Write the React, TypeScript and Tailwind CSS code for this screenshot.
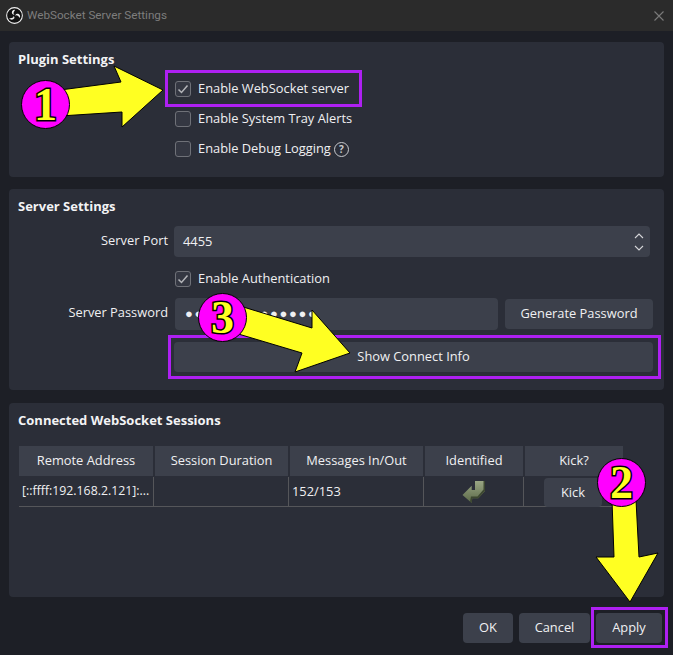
import React from "react"

const font = "font-['Open_Sans',sans-serif]"

const Checkbox = ({ checked, label, children }: { checked?: boolean; label: string; children?: React.ReactNode }) => (
  <div className="flex items-center h-[16px] text-[12.85px] text-[#f0f0f2]">
    <span className="w-[16px] h-[16px] mr-[7px] rounded-[3px] border-[1.5px] border-[#6f7178] bg-[#343742] flex items-center justify-center">
      {checked && (
        <svg width="12" height="12" viewBox="0 0 12 12" fill="none">
          <path d="M1.5 6.5L4.5 9.5L10.5 2.5" stroke="#b4b5b9" strokeWidth="1.5" />
        </svg>
      )}
    </span>
    <span>{label}</span>
    {children}
  </div>
)

const Panel = ({ title, className, children }: { title: string; className: string; children: React.ReactNode }) => (
  <section className={`bg-[#2b2e38] rounded-[4px] mx-[9px] ${className}`}>
    <h2 className="font-bold text-[13px] leading-[18px] text-[#f3f3f5] pl-[9px]">{title}</h2>
    {children}
  </section>
)

const Btn = ({ className, children }: { className: string; children: React.ReactNode }) => (
  <button className={`bg-[#3c404b] rounded-[4px] text-[12.85px] text-[#f0f0f2] flex items-center justify-center ${className}`}>
    {children}
  </button>
)

const headers = [
  { label: "Remote Address", w: "w-[134px]" },
  { label: "Session Duration", w: "w-[133px]" },
  { label: "Messages In/Out", w: "w-[133px]" },
  { label: "Identified", w: "w-[98px]" },
  { label: "Kick?", w: "w-[98px]" },
]

const ObsLogo = () => (
  <svg width="17" height="17" viewBox="0 0 16 16" fill="none" className="mr-[4px]">
    <circle cx="8" cy="8" r="7.4" stroke="#eeeeee" strokeWidth="1" fill="#111111" />
    <path d="M8.6 2.6C6.2 2.4 5 4.4 5.7 6.2C6.2 7.2 7.2 7.4 8 7C7 6.8 6.8 5.6 7.4 4.6C7.8 3.8 8.4 3.2 8.6 2.6Z" fill="#eeeeee" />
    <path d="M13 10.4C14 8.2 12.4 6.2 10.4 6.4C9.4 6.6 8.8 7.4 8.8 8.2C9.4 7.4 10.6 7.6 11.4 8.4C12.1 9 12.7 9.8 13 10.4Z" fill="#eeeeee" />
    <path d="M3 10.6C4.4 12.6 6.8 12.2 7.8 10.6C8.2 9.6 7.8 8.8 7 8.4C7.3 9.4 6.4 10.2 5.2 10.4C4.4 10.6 3.6 10.7 3 10.6Z" fill="#eeeeee" />
  </svg>
)

const Badge = ({ n, className }: { n: string; className: string }) => (
  <div className={`absolute w-[49px] h-[49px] rounded-full bg-[#ff00ff] border border-black flex items-center justify-center font-['Liberation_Serif',serif] font-bold text-[46px] leading-none text-[#ffff22] [-webkit-text-stroke:3px_black] [paint-order:stroke_fill] ${className}`}>
    {n}
  </div>
)

const Outline = ({ className }: { className: string }) => (
  <div className={`absolute border-[3px] border-[#ae20f2] ${className}`} />
)

export default function App() {
  return (
    <div className={`relative w-[673px] h-[655px] overflow-hidden bg-[#1d1f26] ${font}`}>
      {/* title bar */}
      <div className="h-[31px] bg-[#2b2b2b] flex items-center pl-[6px] pr-[9px]">
        <ObsLogo />
        <span className="font-['Roboto',sans-serif] text-[11.7px] text-[#7d7d7d]">WebSocket Server Settings</span>
        <svg width="10" height="10" viewBox="0 0 10 10" className="ml-auto" fill="none">
          <path d="M0.5 0.5L9.5 9.5M9.5 0.5L0.5 9.5" stroke="#7a7a7a" strokeWidth="1.1" />
        </svg>
      </div>

      <Panel title="Plugin Settings" className="mt-[11px] h-[135px] pt-[8px]">
        <div className="flex flex-col gap-[14px] pl-[166px] mt-[13px]">
          <Checkbox checked label="Enable WebSocket server" />
          <Checkbox label="Enable System Tray Alerts" />
          <Checkbox label="Enable Debug Logging">
            <span className="ml-[3px] w-[15px] h-[15px] rounded-full border-[1.5px] border-[#c9cace] text-[10px] font-bold leading-none text-[#c9cace] flex items-center justify-center">?</span>
          </Checkbox>
        </div>
      </Panel>

      <Panel title="Server Settings" className="mt-[12px] h-[201px] pt-[8px]">
        <div className="flex items-center mt-[11px] h-[31px]">
          <label className="w-[159px] text-right text-[12.85px] text-[#f0f0f2] -mt-[2px]">Server Port</label>
          <div className="ml-[6px] w-[476px] h-[31px] bg-[#3c404b] rounded-[4px] flex items-center pl-[9px] pr-[6px] text-[12.85px] text-[#f0f0f2]">
            4455
            <svg width="10" height="20" viewBox="0 0 10 20" fill="none" className="ml-auto">
              <path d="M1 6L5 2L9 6M1 14L5 18L9 14" stroke="#d5d6d9" strokeWidth="1.1" />
            </svg>
          </div>
        </div>
        <div className="pl-[166px] mt-[14px]">
          <Checkbox checked label="Enable Authentication" />
        </div>
        <div className="flex items-center mt-[11px] h-[32px]">
          <label className="w-[159px] text-right text-[12.85px] text-[#f0f0f2] -mt-[2px]">Server Password</label>
          <div className="ml-[7px] w-[323px] h-[32px] bg-[#3c404b] rounded-[4px] flex items-center pl-[10px] text-[13px] tracking-[1.6px] text-[#f0f0f2]">
            ●●●●●●●●●●●●●●
          </div>
          <Btn className="ml-[7px] w-[148px] h-[30px]">Generate Password</Btn>
        </div>
        <Btn className="ml-[165px] mt-[12px] w-[479px] h-[30px]">Show Connect Info</Btn>
      </Panel>

      <Panel title="Connected WebSocket Sessions" className="mt-[13px] h-[194px] pt-[8px]">
        <div className="ml-[10px] mt-[17px] w-[604px] text-[12.85px] text-[#f0f0f2]">
          <div className="flex gap-[2px] h-[30px]">
            {headers.map((h) => (
              <div key={h.label} className={`${h.w} bg-[#3c404b] flex items-center justify-center`}>{h.label}</div>
            ))}
          </div>
          <div className="flex h-[30px] mt-[1px] border-b border-[#55565a]">
            <div className="w-[135px] border-r border-[#55565a] pl-[3px] flex items-center text-[12.3px] whitespace-nowrap overflow-hidden">[::ffff:192.168.2.121]:...</div>
            <div className="w-[135px] border-r border-[#55565a]" />
            <div className="w-[135px] border-r border-[#55565a] pl-[3px] flex items-center">152/153</div>
            <div className="w-[100px] border-r border-[#55565a] flex items-center justify-center">
              <svg width="24" height="24" viewBox="0 0 24 24">
                <defs>
                  <linearGradient id="ret" x1="0" y1="0" x2="0" y2="1">
                    <stop offset="0" stopColor="#9aa684" />
                    <stop offset="1" stopColor="#5a6847" />
                  </linearGradient>
                </defs>
                <path d="M13 1H23V11L16.3 18.3H10.3L9.7 23L0.5 15L9.7 5.7V10H13Z" fill="url(#ret)" />
                <path d="M23 1V11L16.3 18.3H10.3L9.7 23L8 21.5L9 16.5H15.5L21.5 9.5V1Z" fill="#3d4731" />
              </svg>
            </div>
            <div className="flex-1 flex items-start pl-[20px] pt-[1px]">
              <Btn className="w-[58px] h-[29px]">Kick</Btn>
            </div>
          </div>
        </div>
      </Panel>

      <div className="flex justify-end gap-[6px] pr-[11px] mt-[16px]">
        <Btn className="w-[50px] h-[30px]">OK</Btn>
        <Btn className="w-[71px] h-[30px]">Cancel</Btn>
        <Btn className="w-[66px] h-[30px]">Apply</Btn>
      </div>

      {/* annotations drawn over the dialog */}
      <Outline className="left-[165px] top-[70px] w-[197px] h-[37px]" />
      <Outline className="left-[168px] top-[335px] w-[493px] h-[44px]" />
      <Outline className="left-[591px] top-[607px] w-[77px] h-[41px]" />
      <svg width="673" height="655" className="absolute left-0 top-0 pointer-events-none">
        <g fill="#ffff22" stroke="#000" strokeWidth="1">
          <polygon points="60,90 121,82 114,66 163,90 122,127 122,112 60,116" />
          <polygon points="240,306 312,328 312,310 350,353 295,372 302,353 235,333" />
          <polygon points="612,500 614,557 596,557 630,602 658,553 639,557 636,500" />
        </g>
      </svg>
      <Badge n="1" className="left-[21px] top-[80px]" />
      <Badge n="3" className="left-[198px] top-[293px]" />
      <Badge n="2" className="left-[597px] top-[458px]" />
    </div>
  )
}
